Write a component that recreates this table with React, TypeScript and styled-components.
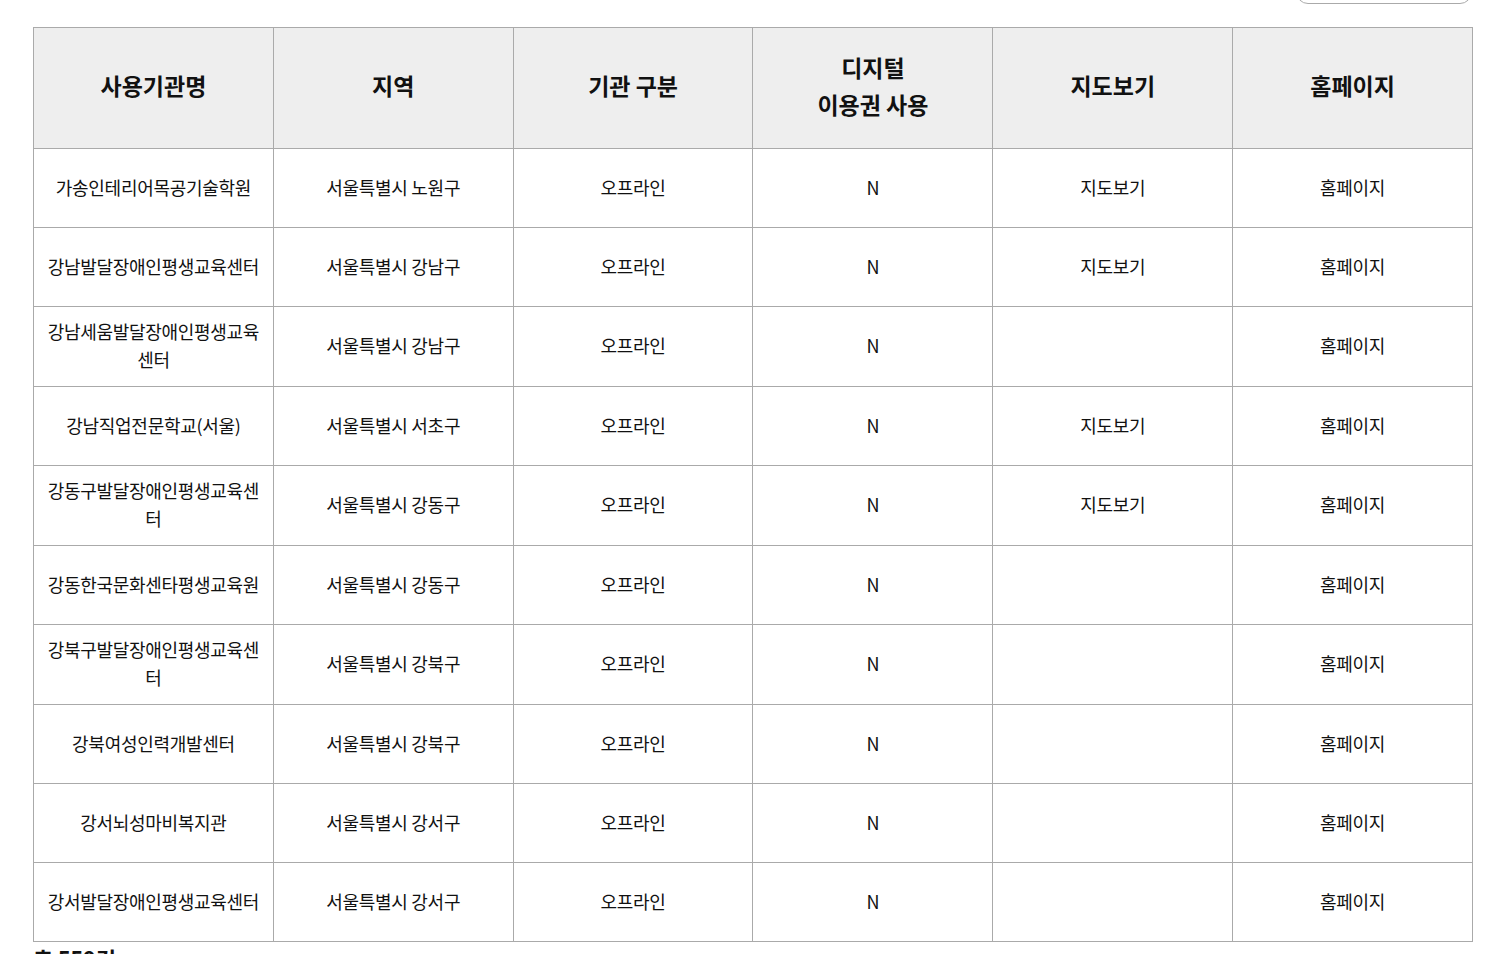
import React from "react";
import styled, { createGlobalStyle } from "styled-components";

const Global = createGlobalStyle`
  html, body { margin: 0; padding: 0; background: #fff; }
  body { font-family: "Noto Sans CJK KR", "Noto Sans", sans-serif; color: #111; overflow: hidden; }
`;

const Page = styled.div`
  width: 1440px;
  padding: 0 0 0 33px;
  display: flex;
  flex-direction: column;
`;

const TopBar = styled.div`
  display: flex;
  justify-content: flex-end;
  margin-top: -36px;
  height: 40px;
`;

const SearchBox = styled.div`
  width: 176px;
  height: 40px;
  box-sizing: border-box;
  border: 1px solid #aaa;
  border-radius: 12px;
  margin-right: 1px;
  background: #fff;
`;

const Table = styled.table`
  margin-top: 23px;
  width: 1440px;
  table-layout: fixed;
  border-collapse: collapse;
  border-top: 1px solid #aaa;
`;

const Th = styled.th`
  background: #eeeeee;
  border: 1px solid #aaa;
  height: 121px;
  box-sizing: border-box;
  padding: 0 10px 5px;
  font-size: 23px;
  font-weight: 700;
  letter-spacing: 0;
  line-height: 37px;
  color: #111;
  text-align: center;
  vertical-align: middle;
`;

const Td = styled.td`
  border: 1px solid #aaa;
  height: 79px;
  box-sizing: border-box;
  padding: 10px 10px 13px;
  font-size: 18px;
  letter-spacing: -0.3px;
  line-height: 28px;
  color: #111;
  text-align: center;
  vertical-align: middle;
  word-break: break-all;
`;

const Total = styled.div`
  margin-top: 2px;
  font-size: 22px;
  font-weight: 700;
  line-height: 28px;
  letter-spacing: -0.3px;
  color: #111;
`;

type Row = { name: string; region: string; map: boolean };

const rows: Row[] = [
  { name: "가송인테리어목공기술학원", region: "서울특별시 노원구", map: true },
  { name: "강남발달장애인평생교육센터", region: "서울특별시 강남구", map: true },
  { name: "강남세움발달장애인평생교육센터", region: "서울특별시 강남구", map: false },
  { name: "강남직업전문학교(서울)", region: "서울특별시 서초구", map: true },
  { name: "강동구발달장애인평생교육센터", region: "서울특별시 강동구", map: true },
  { name: "강동한국문화센타평생교육원", region: "서울특별시 강동구", map: false },
  { name: "강북구발달장애인평생교육센터", region: "서울특별시 강북구", map: false },
  { name: "강북여성인력개발센터", region: "서울특별시 강북구", map: false },
  { name: "강서뇌성마비복지관", region: "서울특별시 강서구", map: false },
  { name: "강서발달장애인평생교육센터", region: "서울특별시 강서구", map: false },
];

export default function App() {
  return (
    <>
      <Global />
      <Page>
        <TopBar>
          <SearchBox />
        </TopBar>
        <Table>
          <thead>
            <tr>
              <Th>사용기관명</Th>
              <Th>지역</Th>
              <Th>기관 구분</Th>
              <Th>
                디지털
                <br />
                이용권 사용
              </Th>
              <Th>지도보기</Th>
              <Th>홈페이지</Th>
            </tr>
          </thead>
          <tbody>
            {rows.map((r) => (
              <tr key={r.name}>
                <Td>{r.name}</Td>
                <Td>{r.region}</Td>
                <Td>오프라인</Td>
                <Td>N</Td>
                <Td>{r.map ? "지도보기" : ""}</Td>
                <Td>홈페이지</Td>
              </tr>
            ))}
          </tbody>
        </Table>
        <Total>총 559건</Total>
      </Page>
    </>
  );
}
